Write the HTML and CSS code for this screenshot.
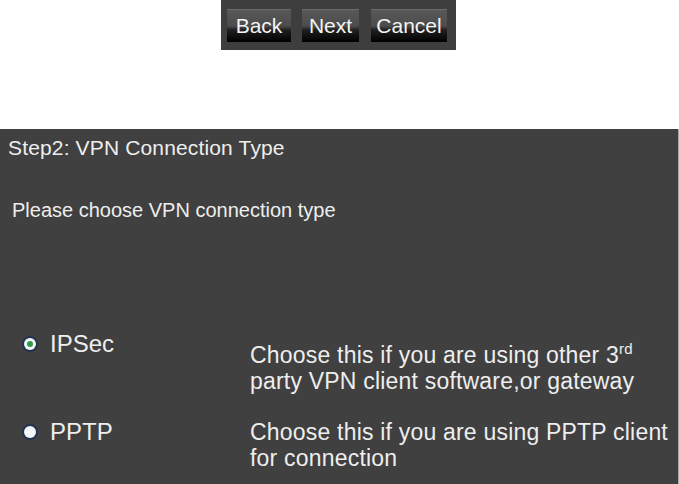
FILE: index.html
```html
<!DOCTYPE html>
<html lang="en">
<head>
    <meta charset="UTF-8">
    <meta name="viewport" content="width=device-width, initial-scale=1.0">
    <title>VPN Wizard</title>
    <link rel="stylesheet" href="styles.css">
</head>
<body>
    <div class="toolbar">
        <div class="buttons">
            <button type="button" class="btn-back">Back</button>
            <button type="button" class="btn-next">Next</button>
            <button type="button" class="btn-cancel">Cancel</button>
        </div>
    </div>

    <div class="panel">
        <div class="step-title">Step2: VPN Connection Type</div>
        <div class="prompt">Please choose VPN connection type</div>

        <div class="options">
            <div class="option">
                <label class="choice">
                    <span class="radio checked"></span>
                    IPSec
                </label>
                <div class="desc raised">Choose this if you are using other 3<sup>rd</sup><br>party VPN client software,or gateway</div>
            </div>

            <div class="option">
                <label class="choice">
                    <span class="radio"></span>
                    PPTP
                </label>
                <div class="desc">Choose this if you are using PPTP client<br>for connection</div>
            </div>
        </div>
    </div>
</body>
</html>
```

FILE: styles.css
```css
body {
    margin: 0;
    background-color: #ffffff;
    font-family: "Liberation Sans", Arial, sans-serif;
    color: #eeeeee;
}

.toolbar {
    display: flex;
    justify-content: center;
}

.buttons {
    display: flex;
    width: 235px;
    height: 50px;
    padding: 9px 0 0 6px;
    box-sizing: border-box;
    background-color: #3e3e3e;
    margin-right: 2px;
}

button {
    height: 33px;
    padding: 0;
    border: none;
    border-top: 1px solid #6a6a6a;
    background: linear-gradient(#585858 0%, #4c4c4c 50%, #202020 62%, #000000 100%);
    color: #f4f4f4;
    font-family: "Liberation Sans", Arial, sans-serif;
    font-size: 21px;
    cursor: pointer;
}

.btn-back { width: 64px; }
.btn-next { width: 57px; margin-left: 11px; }
.btn-cancel { width: 76px; margin-left: 12px; }

.panel {
    margin-top: 79px;
    height: 355px;
    width: 679px;
    box-sizing: border-box;
    background-color: #404040;
    border-right: 1px solid #a8a8a8;
    padding: 7px 0 0 8px;
}

.step-title {
    font-size: 21px;
    line-height: 24px;
    letter-spacing: 0.15px;
}

.prompt {
    margin-top: 38px;
    padding-left: 4px;
    font-size: 20px;
    line-height: 24px;
}

.options {
    display: flex;
    flex-direction: column;
    gap: 25px;
    margin-top: 109px;
}

.option {
    display: flex;
    align-items: flex-start;
}

.choice {
    display: flex;
    align-items: center;
    gap: 14px;
    width: 242px;
    padding-left: 16px;
    box-sizing: border-box;
    height: 26px;
    font-size: 24px;
}

.radio {
    width: 12px;
    height: 12px;
    border-radius: 50%;
    background-color: #f4f6f8;
    box-shadow: 0 0 0 2px #22344f;
    position: relative;
    flex-shrink: 0;
}

.radio.checked::after {
    content: "";
    position: absolute;
    left: 3px;
    top: 3px;
    width: 6px;
    height: 6px;
    border-radius: 50%;
    background-color: #2f9a45;
}

.desc {
    font-size: 23px;
    line-height: 26px;
    letter-spacing: 0.2px;
}

.desc.raised {
    padding-top: 11px;
}

.desc sup {
    font-size: 15px;
    line-height: 0;
    vertical-align: 9px;
}
```
